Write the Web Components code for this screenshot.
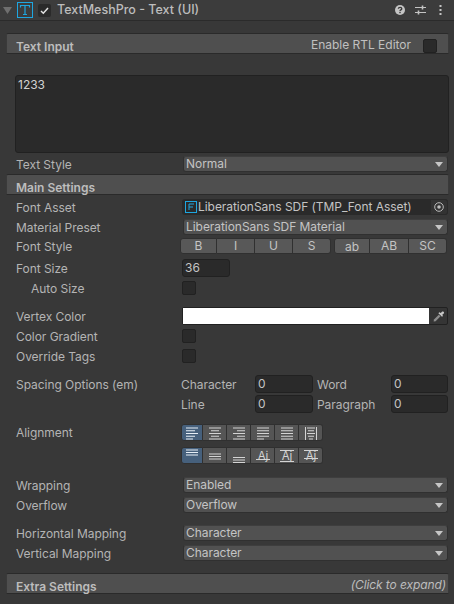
<!DOCTYPE html>
<html><head><meta charset="utf-8"><style>
html,body{margin:0;padding:0;background:#383838;overflow:hidden}
body{width:454px;height:604px;font:12px/16px Inter,"Noto Sans",sans-serif;color:#bdbdbd}
</style></head><body>
<tmp-inspector>
<tmp-header title="TextMeshPro - Text (UI)"></tmp-header>
<tmp-section style="margin-top:12px" label="Text Input" right="Enable RTL Editor" check></tmp-section>
<tmp-textarea style="margin-top:21px">1233</tmp-textarea>
<tmp-row style="margin-top:3px" label="Text Style" h="16"><tmp-dropdown>Normal</tmp-dropdown></tmp-row>
<tmp-section style="margin-top:2px" label="Main Settings" bold></tmp-section>
<tmp-row style="margin-top:4px" label="Font Asset" h="16"><tmp-object>LiberationSans SDF (TMP_Font Asset)</tmp-object></tmp-row>
<tmp-row style="margin-top:4px" label="Material Preset" h="16"><tmp-dropdown>LiberationSans SDF Material</tmp-dropdown></tmp-row>
<tmp-row style="margin-top:3px" label="Font Style" h="16"><tmp-styles></tmp-styles></tmp-row>
<tmp-row style="margin-top:5px" label="Font Size" h="18"><tmp-field style="width:48px">36</tmp-field></tmp-row>
<tmp-row style="margin-top:4px" label="Auto Size" indent h="14"><tmp-check></tmp-check></tmp-row>
<tmp-row style="margin-top:12px" label="Vertex Color" h="18"><tmp-color></tmp-color></tmp-row>
<tmp-row style="margin-top:4px" label="Color Gradient" h="14"><tmp-check></tmp-check></tmp-row>
<tmp-row style="margin-top:6px" label="Override Tags" h="14"><tmp-check></tmp-check></tmp-row>
<tmp-row style="margin-top:12px" label="Spacing Options (em)" h="18"><tmp-pair a="Character" b="Word"></tmp-pair></tmp-row>
<tmp-row style="margin-top:2px" h="18"><tmp-pair a="Line" b="Paragraph"></tmp-pair></tmp-row>
<tmp-row style="margin-top:10px" label="Alignment" h="18"><tmp-align row="h"></tmp-align></tmp-row>
<tmp-row style="margin-top:5px" h="18"><tmp-align row="v"></tmp-align></tmp-row>
<tmp-row style="margin-top:13px" label="Wrapping" h="16"><tmp-dropdown>Enabled</tmp-dropdown></tmp-row>
<tmp-row style="margin-top:4px" label="Overflow" h="16"><tmp-dropdown>Overflow</tmp-dropdown></tmp-row>
<tmp-row style="margin-top:12px" label="Horizontal Mapping" h="16"><tmp-dropdown>Character</tmp-dropdown></tmp-row>
<tmp-row style="margin-top:4px" label="Vertical Mapping" h="16"><tmp-dropdown>Character</tmp-dropdown></tmp-row>
<tmp-section style="margin-top:12px" label="Extra Settings" bold hint="(Click to expand)"></tmp-section>
</tmp-inspector>
<script>
const def=(name,css,html)=>customElements.define(name,class extends HTMLElement{
  connectedCallback(){ if(this.shadowRoot)return;
    const r=this.attachShadow({mode:'open'});
    r.innerHTML='<style>'+css+'</style>'+(typeof html==='function'?html(this):html);
  }});
const a=(e,n,d='')=>e.getAttribute(n)??d;
const check=':host{display:block;width:14px;height:14px;box-sizing:border-box;background:#2a2a2a;border:1px solid #212121;border-radius:2px}';

def('tmp-inspector',':host{display:flex;flex-direction:column;width:454px;height:604px;overflow:hidden}','<slot></slot>');

def('tmp-header',`:host{display:flex;align-items:center;height:20px;box-sizing:content-box;border-bottom:1px solid #2b2b2b;background:#3c3c3c;padding-left:3px}
.tri{width:9px;height:7px;flex:none;margin-top:1px}.t{width:16px;height:16px;margin-left:5px;flex:none}
.c{margin-left:5px;width:13px;height:13px;flex:none}
.n{margin-left:6px;font-size:12.5px;font-weight:500;color:#bdbdbd;flex:1}
.r{display:flex;align-items:center;padding-right:12px}`,
e=>`<svg class="tri" viewBox="0 0 9 7"><path d="M0 0H9L4.5 7Z" fill="#6f6f6f"/></svg>
<svg class="t" viewBox="0 0 16 16" fill="none" stroke="#1ea6e0"><rect x=".5" y=".5" width="15" height="15"/><path d="M3.5 5.5V3.5H12.5V5.5M8 3.5V12.5M6 12.5H10" stroke-width="1.2"/></svg>
<svg class="c" viewBox="0 0 13 13"><rect width="13" height="13" rx="2" fill="#2a2a2a"/><path d="M3 7l2.3 2.2L10 4" fill="none" stroke="#e2e2e2" stroke-width="1.5"/></svg>
<span class="n">${a(e,'title')}</span>
<span class="r">
<svg width="10" height="10" viewBox="0 0 10 10"><circle cx="5" cy="5" r="5" fill="#c4c4c4"/><path d="M3.3 3.8C3.5 1.9 6.8 2 6.8 3.7C6.8 4.9 5 4.8 5 6" fill="none" stroke="#383838" stroke-width="1.3"/><rect x="4.3" y="6.8" width="1.4" height="1.4" fill="#383838"/></svg>
<svg style="margin-left:10px" width="11" height="10" viewBox="0 0 11 10" fill="none" stroke="#c4c4c4"><path d="M0 2.5H11M0 7.5H11"/><path d="M7.5 0.5V4.5M3.5 5.5V9.5" stroke-width="1.6"/></svg>
<svg style="margin-left:13px" width="3" height="10" viewBox="0 0 3 10" fill="#c4c4c4"><rect x=".5" width="2" height="2"/><rect x=".5" y="4" width="2" height="2"/><rect x=".5" y="8" width="2" height="2"/></svg>
</span>`);

def('tmp-section',`:host{display:flex;align-items:flex-end;box-sizing:border-box;height:21px;margin-left:6px;margin-right:5px;background:#4f4f4f;border:1px solid #2a2a2a;border-left-color:#3a3a3a;border-right-color:#3a3a3a;border-radius:2px 2px 0 0;padding:0 0 0 9px;position:relative}
.l{font-weight:600;color:#bdbdbd;line-height:12px;flex:1}
.r{color:#c0c0c0;line-height:18px;align-self:center;margin:2px 12px 0 0;letter-spacing:-.02px}
.i{font-style:italic;color:#bdbdbd;line-height:18px;align-self:center;margin:3px 2px 0 0;letter-spacing:-.1px}
.b{width:14px;height:14px;box-sizing:border-box;background:#2a2a2a;border:1px solid #212121;border-radius:2px;align-self:center;margin:5px 11px 0 0}`,
e=>`<span class="l">${a(e,'label')}</span>`+
(e.hasAttribute('right')?`<span class="r">${a(e,'right')}</span><span class="b"></span>`:'')+
(e.hasAttribute('hint')?`<span class="i">${a(e,'hint')}</span>`:''));

def('tmp-textarea',`:host{display:block;box-sizing:border-box;height:78px;margin-left:15px;margin-right:5px;background:#2a2a2a;border:1px solid #212121;border-radius:3px;padding:1px 2px;color:#d2d2d2}`,'<slot></slot>');

def('tmp-row',`:host{display:flex;align-items:flex-start;padding-left:16px;padding-right:6px}
.l{width:165px;flex:none;color:#b4b4b4;letter-spacing:-.05px;white-space:nowrap}
.f{flex:1;min-width:0;display:flex;align-items:center}`,
e=>{const h=+a(e,'h');return `<style>:host{height:${h}px}</style><span class="l" style="${e.hasAttribute('indent')?'padding-left:15px;box-sizing:border-box;':''}padding-top:${h<16?0:1}px;line-height:${Math.max(h,16)}px">${a(e,'label')}</span><span class="f"><slot></slot></span>`});

def('tmp-dropdown',`:host{display:flex;flex:1;align-items:center;height:16px;box-sizing:border-box;margin-left:2px;padding:0 4px 0 2px;background:#515151;border:1px solid #303030;border-top-color:#3e3e3e;border-radius:3px;color:#c4c4c4;line-height:14px;letter-spacing:-.05px}
span{flex:1;margin-top:-1px;white-space:nowrap}svg{flex:none}`,
'<span><slot></slot></span><svg width="8" height="5" viewBox="0 0 8 5"><path d="M0 0H8L4 5Z" fill="#c6c6c6"/></svg>');

def('tmp-object',`:host{display:flex;flex:1;align-items:center;height:16px;box-sizing:border-box;margin-left:1px;background:#2a2a2a;border-radius:3px;color:#c4c4c4;letter-spacing:-.05px}
.i{flex:none;margin-left:3px;margin-right:1px}.n{flex:1;white-space:nowrap}
.p{flex:none;width:18px;height:16px;background:#333;display:flex;align-items:center;justify-content:center;border-radius:0 3px 3px 0;box-sizing:border-box;border:1px solid #2a2a2a}`,
`<svg class="i" width="12" height="12" viewBox="0 0 12 12" fill="none" stroke="#1ea6e0"><rect x=".5" y=".5" width="11" height="11"/><path d="M4 9V3H9M4 6H8" /></svg><span class="n"><slot></slot></span><span class="p"><svg width="10" height="10" viewBox="0 0 10 10" fill="none" stroke="#bdbdbd"><circle cx="5" cy="5" r="4.3"/><circle cx="5" cy="5" r="1.8" fill="#bdbdbd" stroke="none"/></svg></span>`);

const btn=`button{all:unset;box-sizing:border-box;height:16px;background:#585858;border:1px solid #303030;border-left-width:0;display:flex;align-items:center;justify-content:center;color:#c4c4c4;font:inherit;line-height:14px}
button:first-of-type{border-left-width:1px;border-radius:3px 0 0 3px}button:last-of-type{border-radius:0 3px 3px 0}`;
def('tmp-styles',`:host{display:flex;width:267px;margin-left:-1px;gap:3px}
.g{display:flex}${btn}`,
`<div class="g">${['B','I','U','S'].map(t=>`<button style="width:${t=='B'?37:38}px">${t}</button>`).join('')}</div>
<div class="g">${['ab','AB','SC'].map(t=>`<button style="width:${t=='ab'?36:t=='AB'?39:38}px${t=='ab'?';padding-top:2px':''}">${t}</button>`).join('')}</div>`);

def('tmp-field',`:host{display:flex;align-items:center;box-sizing:border-box;height:18px;background:#2a2a2a;border:1px solid #212121;border-radius:3px;padding:0 2px;margin-left:1px;color:#c4c4c4}`,'<slot></slot>');
def('tmp-check',check+':host{margin-left:1px}','');
def('tmp-color',`:host{display:flex;flex:1;height:18px;margin-left:1px;box-sizing:border-box;border:1px solid #212121;border-radius:2px;background:#353535}
.w{flex:1;background:#fff}.p{width:18px;flex:none;display:flex;align-items:center;justify-content:center}`,
`<div class="w"></div><div class="p"><svg width="13" height="13" viewBox="0 0 13 13"><path d="M7.3 2.2L8.8 3.1L10.2 1.5A1.4 1.4 0 0 1 12 3.3L10.3 4.7L11 6L10 6.8L6.4 3.2Z" fill="#c8c8c8"/><path d="M6.8 4.7L8.5 6.3L3.6 11.2L1.6 11.6L2 9.5Z" fill="#8e8e8e"/></svg></div>`);

def('tmp-pair',`:host{display:grid;grid-template-columns:74px 58px 78px 57px;width:267px;align-items:center}
.n{color:#b4b4b4;letter-spacing:-.05px;white-space:nowrap;padding-top:1px}.i{box-sizing:border-box;height:18px;background:#2a2a2a;border:1px solid #212121;border-radius:3px;padding:0 2px;color:#c4c4c4;display:flex;align-items:center}
.n2{padding-left:4px}`,
e=>`<span class="n">${a(e,'a')}</span><span class="i">0</span><span class="n n2">${a(e,'b')}</span><span class="i">0</span>`);

const ln=(rows)=>rows.map(([x1,x2,y])=>`<path d="M${x1} ${y}H${x2}"/>`).join('');
const ic=(body)=>`<svg width="14" height="14" viewBox="0 0 14 14" fill="none" stroke="currentColor">${body}</svg>`;
const ys=[2,4.75,7.5,10.25,13];
const five=(w)=>ic(ln(ys.map((y,i)=>w(i).concat(y))));
const H=[
 five(i=>[1,i%2?10:13].slice(0,2).map((v,k)=>k?(i==4?8:v):v)),
 five(i=>i%2?[3,11]:[1,13]),
 five(i=>i%2?[5,13]:[1,13]),
 five(i=>i==4?[1,8]:[1,13]),
 five(i=>[1,13]),
 ic(`<path d="M1.5 1V14M12.5 1V14"/>`+ln([[3,11,2],[4,10,4.75],[3,11,7.5],[4,10,10.25],[5,9,13]]))];
const gl=(lines,y=10.5)=>`<svg width="16" height="14" viewBox="0 0 16 14"><text x="8" y="${y}" text-anchor="middle" font-family="Inter,sans-serif" font-size="11.5" fill="currentColor">Aj</text><g stroke="currentColor" fill="none">${lines.map(l=>`<path d="M1 ${l}H15"/>`).join('')}</g></svg>`;
const three=(y)=>ic(ln([0,2.5,5].map(d=>[1,13,y+d])));
const V=[three(1), three(5), three(8.5), gl([10.5]), gl([1.5,12.5]), gl([1.5,9.5])];
def('tmp-align',`:host{display:flex;margin:1px 0 0}${btn}
button{width:24px;height:17px;background:#555;color:#d4d4d4}
button:first-of-type{width:22px;background:#46607c;color:#e6eef6}`,
e=>(a(e,'row')=='h'?H:V).map(s=>`<button>${s}</button>`).join(''));
</script>
</body></html>
